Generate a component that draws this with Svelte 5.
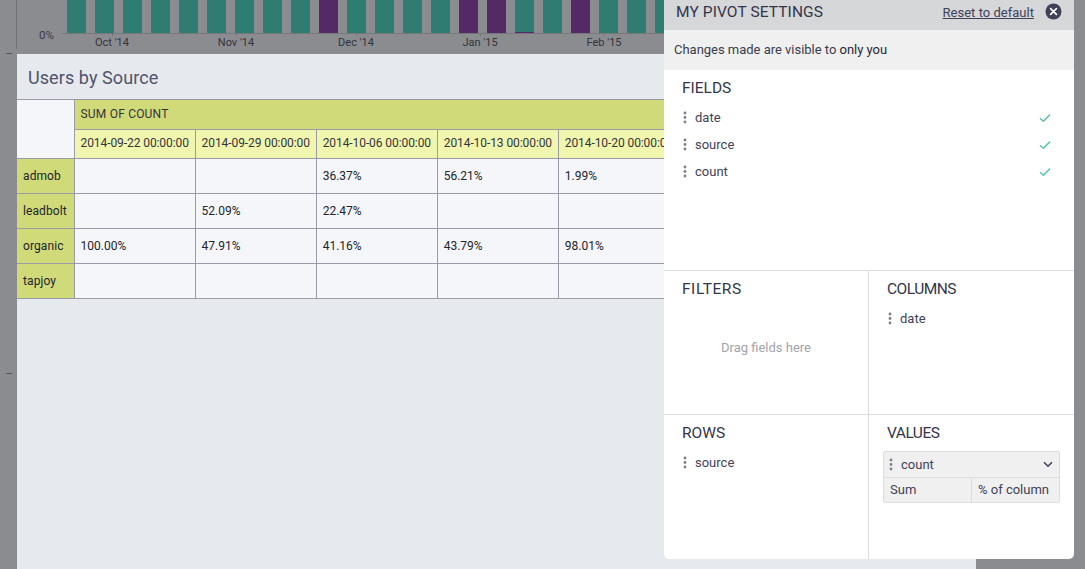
<script>
  const bars = ['t','t','t','t','t','t','t','t','t','p','t','t','t','t','p','p','m','t','p','t','t','t'];
  const months = [["Oct '14",112],["Nov '14",236],["Dec '14",356],["Jan '15",480],["Feb '15",604]];
  const dates = ['2014-09-22','2014-09-29','2014-10-06','2014-10-13','2014-10-20'];
  const rows = [
    ['admob','','','36.37%','56.21%','1.99%'],
    ['leadbolt','','52.09%','22.47%','',''],
    ['organic','100.00%','47.91%','41.16%','43.79%','98.01%'],
    ['tapjoy','','','','','']
  ];
  const fields = ['date','source','count'];
</script>

{#snippet grip()}
  <svg class="grip" width="4" height="13" viewBox="0 0 4 13"><circle cx="2" cy="2" r="1.4"/><circle cx="2" cy="6.5" r="1.4"/><circle cx="2" cy="11" r="1.4"/></svg>
{/snippet}

<div class="page">
  <div class="chart">
    <div class="yaxis"></div>
    <span class="zero">0%</span>
    <div class="bars">
      {#each bars as b}
        <div class="bar {b}"></div>
      {/each}
    </div>
    {#each months as [label, x]}
      <div class="month" style="left:{x}px"><i></i><span>{label}</span></div>
    {/each}
    <div class="dash d1"></div>
    <div class="dash d2"></div>
  </div>

  <section class="card">
    <h2>Users by Source</h2>
    <div class="tablewrap">
      <table>
        <colgroup><col class="c0" />{#each [0,1,2,3,4,5] as _}<col class="c1" />{/each}</colgroup>
        <thead>
          <tr class="h1"><th class="corner" rowspan="2"></th><th class="sum" colspan="6">SUM OF COUNT</th></tr>
          <tr class="h2">{#each dates as d}<th class="date">{d} 00:00:00</th>{/each}<th class="date"></th></tr>
        </thead>
        <tbody>
          {#each rows as r}
            <tr>
              <th class="rowh">{r[0]}</th>
              {#each r.slice(1) as c}<td>{c}</td>{/each}
              <td></td>
            </tr>
          {/each}
        </tbody>
      </table>
    </div>
  </section>

  <aside class="panel">
    <header>
      <span class="ptitle">MY PIVOT SETTINGS</span>
      <span class="reset">Reset to default</span>
      <svg class="close" width="17" height="17" viewBox="0 0 17 17"><circle cx="8.5" cy="8.5" r="8" fill="#3f4159"/><path d="M5.6 5.6l5.8 5.8M11.4 5.6l-5.8 5.8" stroke="#fff" stroke-width="1.7" stroke-linecap="round"/></svg>
    </header>
    <div class="notice"><span>Changes made are visible to <b>only you</b></span></div>
    <div class="fields">
      <h3>FIELDS</h3>
      {#each fields as f}
        <div class="item">
          {@render grip()}<span>{f}</span>
          <svg class="check" width="12" height="10" viewBox="0 0 12 10"><path d="M1 5.2l3.4 3L11 1.6" fill="none" stroke="#5cc5b5" stroke-width="1.5"/></svg>
        </div>
      {/each}
    </div>
    <div class="quad">
      <div class="zone bb br">
        <h3 class="wide">FILTERS</h3>
        <div class="empty">Drag fields here</div>
      </div>
      <div class="zone bb">
        <h3 class="narrow">COLUMNS</h3>
        <div class="item">{@render grip()}<span>date</span></div>
      </div>
      <div class="zone br">
        <h3>ROWS</h3>
        <div class="item">{@render grip()}<span>source</span></div>
      </div>
      <div class="zone">
        <h3 class="narrow">VALUES</h3>
        <div class="valuebox">
          <div class="vtop">
            {@render grip()}<span>count</span>
            <svg class="chev" width="10" height="7" viewBox="0 0 10 7"><path d="M1 1.2l4 4 4-4" fill="none" stroke="#3f4159" stroke-width="1.6"/></svg>
          </div>
          <div class="vbot"><span>Sum</span><span>% of column</span></div>
        </div>
      </div>
    </div>
  </aside>
</div>

<style>
  :global(body) { margin: 0; background: #8b8c90; }
  .page {
    position: relative;
    width: 1085px;
    height: 569px;
    overflow: hidden;
    background: #8b8c90;
    font-family: Roboto, "Liberation Sans", sans-serif;
    font-size: 12px;
    color: #2b2d38;
  }
  .chart { position: relative; height: 54px; }
  .yaxis { position: absolute; left: 16px; top: 0; width: 1px; height: 49px; background: #6f7075; }
  .zero { position: absolute; left: 39px; top: 28px; color: #3a3b42; font-size: 11.5px; line-height: 14px; }
  .bars {
    position: absolute; left: 62px; top: 0; width: 602px; height: 34px;
    display: flex; gap: 9px; padding-left: 4.5px; box-sizing: border-box;
    border-bottom: 1px solid #76777b;
  }
  .bar { flex: 0 0 19px; height: 33px; background: #2f7c72; }
  .bar.p { background: #532a66; }
  .bar.m { background: #2f7c72; border-bottom: 1px solid #532a66; box-sizing: border-box; }
  .month { position: absolute; top: 33px; width: 0; }
  .month i { position: absolute; left: 0; top: 0; width: 1px; height: 3px; background: #76777b; }
  .month span { position: absolute; top: 3px; left: -30px; width: 60px; text-align: center; font-size: 11px; line-height: 13px; color: #33343c; }
  .dash { position: absolute; left: 6px; width: 6px; height: 1px; background: #55565b; }
  .d1 { top: 53px; }
  .d2 { top: 373px; }

  .card { margin-left: 17px; width: 959px; height: 515px; background: #e6e9ee; }
  h2 {
    margin: 0; height: 45px; box-sizing: border-box;
    padding: 12px 0 0 11px;
    font-size: 18px; font-weight: 400; line-height: 24px; letter-spacing: .08px;
    color: #50546c;
  }
  .tablewrap { overflow: hidden; }
  table { border-collapse: collapse; table-layout: fixed; width: 784px; border-top: 1px solid #9a9aa8; }
  .c0 { width: 57px; }
  .c1 { width: 121px; }
  th, td {
    border: 1px solid #9a9aa8; box-sizing: border-box; padding: 0 0 0 6px;
    font-weight: 400; text-align: left; white-space: nowrap; overflow: hidden;
    font-size: 12px; color: #22242c;
  }
  th:first-child { border-left: 0; }
  .h1 th { height: 30px; padding-bottom: 2px; }
  .h2 th { height: 29px; padding-bottom: 2px; }
  .corner { padding: 0; }
  tbody tr > * { height: 35px; }
  .corner { background: #f5f6f9; }
  .sum { background: #d1da78; color: #33343c; letter-spacing: .2px; }
  .date { background: #f1f6ae; color: #33343c; letter-spacing: -.08px; }
  .rowh { background: #d1da78; letter-spacing: .1px; }
  td { background: #f5f6f9; }

  .panel {
    position: absolute; left: 664px; top: 0; width: 410px; height: 559px;
    background: #fff; border-radius: 0 0 5px 5px; overflow: hidden;
    display: flex; flex-direction: column;
    color: #3f4159;
  }
  header {
    flex: 0 0 30px; background: #d6d7d9; display: flex; align-items: center;
    padding: 0 12px 0 12px; box-sizing: border-box;
  }
  .ptitle { font-size: 15.5px; line-height: 22px; letter-spacing: .1px; margin-right: auto; color: #33354a; margin-top: -6px; }
  .reset { font-size: 13px; text-decoration: underline; color: #3f4159; margin: -6px 11px 0 0; letter-spacing: .02px; }
  .close { margin-top: -7px; }
  .notice {
    flex: 0 0 40px; background: #f0f0f0; box-sizing: border-box; padding: 0 10px 2px;
    display: flex; align-items: center; font-size: 13px; color: #3a3c4e; letter-spacing: -.02px;
  }
  .notice b { font-weight: 400; color: #262838; }
  h3 { margin: 0; font-size: 15.5px; font-weight: 400; line-height: 20px; color: #33354a; }
  .wide { letter-spacing: .55px; }
  .narrow { letter-spacing: -.5px; }
  .fields { flex: 0 0 201px; box-sizing: border-box; padding: 8px 18px 0 18px; border-bottom: 1px solid #dcdde3; }
  .fields h3 { margin-bottom: 6px; }
  .item { display: flex; align-items: center; height: 27px; font-size: 13px; gap: 8px; }
  .grip { flex: none; fill: #7d7e8c; margin-left: 1px; }
  .check { margin-left: auto; margin-right: 5px; }
  .quad { flex: 1; display: grid; grid-template-columns: 205px 205px; grid-template-rows: 144px 144px; }
  .zone { box-sizing: border-box; padding: 8px 14px 0 18px; }
  .zone .item { margin-top: 6px; }
  .bb { border-bottom: 1px solid #dcdde3; }
  .br { border-right: 1px solid #dcdde3; }
  .empty { text-align: center; color: #a2a3ad; font-size: 13px; margin-top: 41px; padding-right: 4px; }
  .valuebox {
    margin: 8px 0 0 -4px; width: 177px; height: 52px; box-sizing: border-box;
    background: #f0f0f0; border: 1px solid #dcdde3; border-radius: 2px;
    font-size: 13px;
  }
  .vtop { height: 26px; display: flex; align-items: center; gap: 8px; padding: 0 6px 0 4px; border-bottom: 1px solid #dcdde3; box-sizing: border-box; }
  .chev { margin-left: auto; }
  .vbot { display: grid; grid-template-columns: 87px 1fr; height: 24px; align-items: center; }
  .vbot span { padding-left: 6px; line-height: 24px; }
  .vbot span:last-child { border-left: 1px solid #dcdde3; }
</style>
